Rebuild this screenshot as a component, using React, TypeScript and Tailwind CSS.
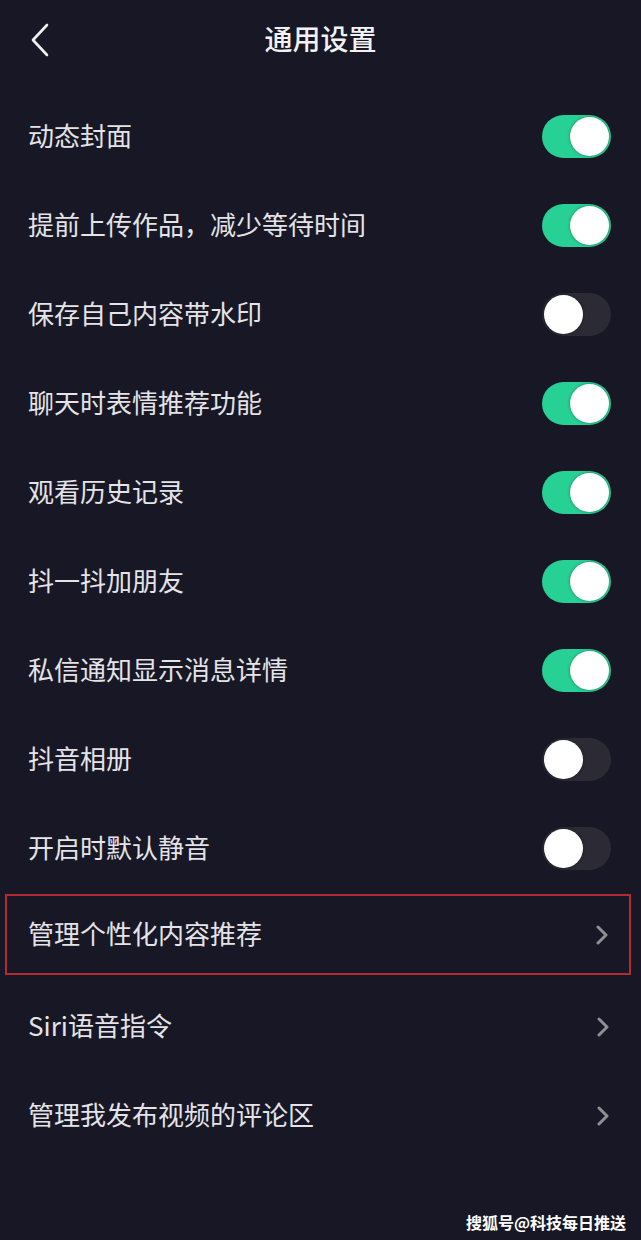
import React from "react";

type Row = { label: string; kind: "on" | "off" | "link"; boxed?: boolean };

const rows: Row[] = [
  { label: "动态封面", kind: "on" },
  { label: "提前上传作品，减少等待时间", kind: "on" },
  { label: "保存自己内容带水印", kind: "off" },
  { label: "聊天时表情推荐功能", kind: "on" },
  { label: "观看历史记录", kind: "on" },
  { label: "抖一抖加朋友", kind: "on" },
  { label: "私信通知显示消息详情", kind: "on" },
  { label: "抖音相册", kind: "off" },
  { label: "开启时默认静音", kind: "off" },
  { label: "管理个性化内容推荐", kind: "link", boxed: true },
  { label: "Siri语音指令", kind: "link" },
  { label: "管理我发布视频的评论区", kind: "link" },
];

function Toggle({ on }: { on: boolean }) {
  return (
    <div
      className={`w-[69px] h-[43px] rounded-full p-[2px] flex items-center ${
        on ? "bg-[#27d094] justify-end" : "bg-[#2b2a35] justify-start"
      }`}
    >
      <div className="w-[39px] h-[39px] rounded-full bg-white shadow-[0_0_3px_rgba(0,0,0,0.4)]" />
    </div>
  );
}

function Chevron() {
  return (
    <svg width="14" height="20" viewBox="0 0 14 20" className="mr-[1px]">
      <path d="M3 2 L11 10 L3 18" fill="none" stroke="#8f8f95" strokeWidth="3" strokeLinecap="round" strokeLinejoin="round" />
    </svg>
  );
}

export default function App() {
  return (
    <div
      className="w-[641px] h-[1240px] bg-[#181726] text-[#e4e4e8] relative overflow-hidden"
      style={{ fontFamily: '"Noto Sans CJK SC", "Noto Sans", sans-serif' }}
    >
      {/* Header */}
      <div className="h-[92px] relative flex items-start justify-center pt-[18px]">
        <svg width="20" height="34" viewBox="0 0 20 34" className="absolute left-[30px] top-[23px]">
          <path d="M17 2 L3 17 L17 32" fill="none" stroke="#f0f0f2" strokeWidth="2.6" strokeLinecap="round" strokeLinejoin="round" />
        </svg>
        <h1 className="text-[28px] leading-[40px] font-medium text-[#f2f2f4]">通用设置</h1>
      </div>

      {/* Settings list */}
      <div className="flex flex-col">
        {rows.map((row, i) => (
          <div key={i} className="h-[89px] flex items-start">
            <div
              className={`flex-1 flex items-center justify-between ${
                row.boxed
                  ? "h-[81px] mt-[1px] ml-[5px] mr-[10px] border-2 border-[#b32a35] pl-[21px] pr-[19px]"
                  : "h-[89px] pl-[28px] pr-[30px]"
              }`}
            >
              <span className="text-[26px] leading-[36px] -mt-[3px]">{row.label}</span>
              {row.kind === "link" ? <Chevron /> : <Toggle on={row.kind === "on"} />}
            </div>
          </div>
        ))}
      </div>

      {/* Watermark */}
      <div className="absolute right-[15px] bottom-[6px] text-[16px] font-bold text-white">
        搜狐号@科技每日推送
      </div>
    </div>
  );
}
